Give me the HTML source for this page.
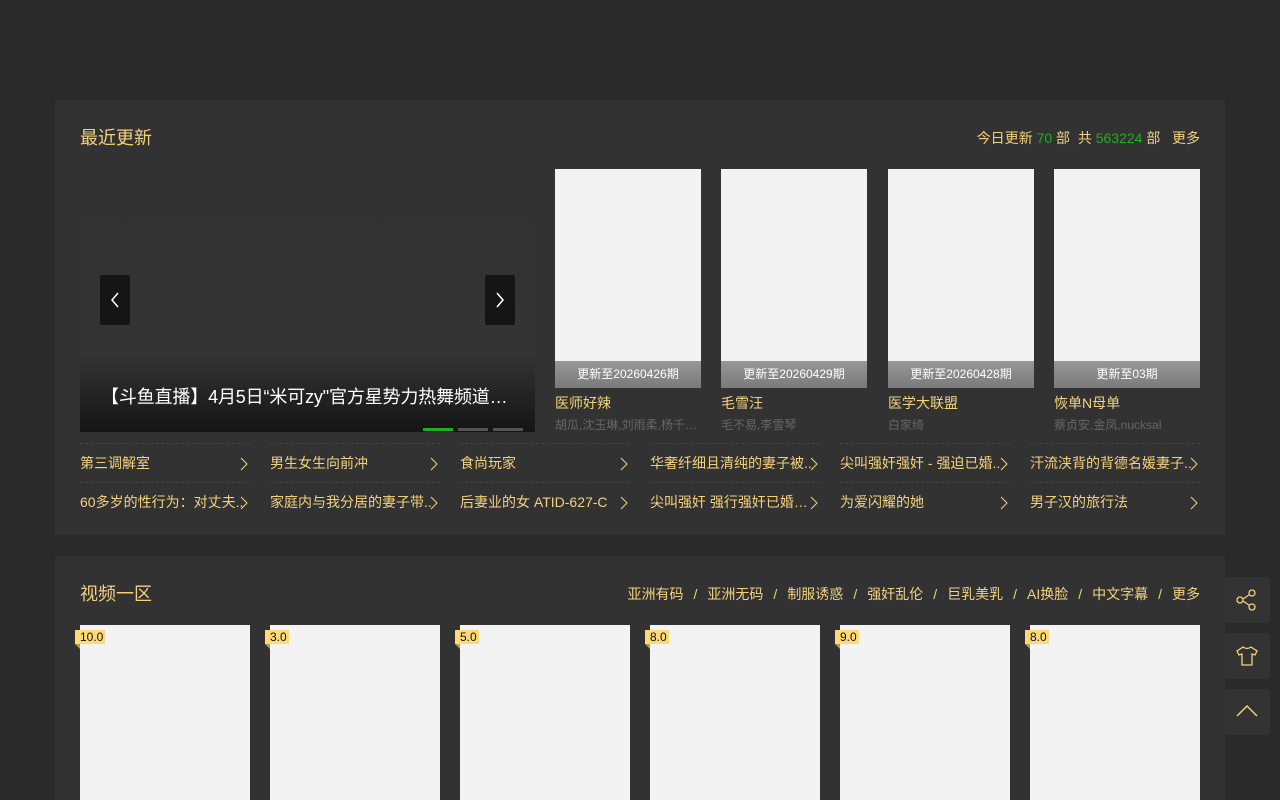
<!DOCTYPE html>
<html style="overflow:hidden;height:800px"><head><meta charset="utf-8"><style>
*{margin:0;padding:0;box-sizing:border-box}
body{width:1280px;height:800px;overflow:hidden;background:#2a2a2a;font-family:"Liberation Sans","Noto Sans CJK SC",sans-serif;color:#f3d27e;font-size:14px;position:relative}
.panel{position:absolute;left:55px;width:1170px;background:#323232}
.h{position:absolute;left:25px;font-size:18px;color:#f3d27e}
.r{position:absolute;right:25px;font-size:14px;white-space:pre}
.r b{font-weight:normal;margin:0 10px}
.g{color:#19b319}
.car{position:absolute;left:25px;top:69px;width:455px;height:263px;background:linear-gradient(#323232 0,#343434 70%,#151515 100%)}
.arr{position:absolute;top:106px;width:30px;height:50px;background:#151515;border-radius:2px}
.arr svg{position:absolute;left:9px;top:17px}
.ct{position:absolute;left:21px;top:214px;font-size:18px;letter-spacing:-0.15px;color:#fff;white-space:nowrap}
.dots{position:absolute;right:12px;top:249px}
.dots i{display:inline-block;width:30px;height:3px;background:#555;margin-left:5px}
.card{position:absolute;top:69px;width:146px}
.card .im{height:219px;background:#f3f3f3;position:relative}
.card .im span{position:absolute;bottom:0;left:0;right:0;height:27px;line-height:27px;text-align:center;color:#fff;font-size:12px;background:linear-gradient(rgba(60,60,60,.5),#7a7a7a)}
.card .t{margin-top:6px;font-size:14px;line-height:18px}
.card .a{margin-top:4px;font-size:12px;color:#666;white-space:nowrap;overflow:hidden}
.li{position:absolute;width:170px;height:39px;border-top:1px dashed #444;line-height:39px;font-size:14px;white-space:nowrap}
.li svg{position:absolute;right:2px;top:13px}
.vc{position:absolute;top:69px;width:170px;height:200px;background:#f3f3f3}
.vc span{position:absolute;left:-5px;top:5px;background:#ffd976;color:#111;font-size:12px;line-height:14px;padding:0 2px 0 5px}
.vc span:after{content:"";position:absolute;left:0;bottom:-5px;border-top:5px solid #b89a40;border-left:5px solid transparent}
.sb{position:absolute;left:1224px;width:46px;height:46px;background:#333;border-radius:4px}
.sb svg{position:absolute;left:11px;top:11px}
</style></head><body>
<div class="panel" style="top:100px;height:435px">
<div class="h" style="top:24px">最近更新</div>
<div class="r" style="top:28px">今日更新 <span class="g">70</span> 部  共 <span class="g">563224</span> 部   更多</div>
<div class="car">
<div class="arr" style="left:20px"><svg width="12" height="16"><path d="M9 1L3 8l6 7" stroke="#fff" fill="none" stroke-width="1.5"/></svg></div>
<div class="arr" style="left:405px"><svg width="12" height="16"><path d="M3 1l6 7-6 7" stroke="#fff" fill="none" stroke-width="1.5"/></svg></div>
<div class="ct">【斗鱼直播】4月5日“米可zy"官方星势力热舞频道…</div>
<div class="dots"><i style="background:#19b319"></i><i></i><i></i></div>
</div>
<div class="card" style="left:500px"><div class="im"><span>更新至20260426期</span></div><div class="t">医师好辣</div><div class="a">胡瓜,沈玉琳,刘雨柔,杨千…</div></div>
<div class="card" style="left:666px"><div class="im"><span>更新至20260429期</span></div><div class="t">毛雪汪</div><div class="a">毛不易,李雪琴</div></div>
<div class="card" style="left:833px"><div class="im"><span>更新至20260428期</span></div><div class="t">医学大联盟</div><div class="a">白家绮</div></div>
<div class="card" style="left:999px"><div class="im"><span>更新至03期</span></div><div class="t">恢单N母单</div><div class="a">蔡贞安,金凤,nucksal</div></div>
<div class="li" style="left:25px;top:343px">第三调解室<svg width="8" height="14"><path d="M1 1l6 6-6 6" stroke="#f3d27e" fill="none"/></svg></div>
<div class="li" style="left:215px;top:343px">男生女生向前冲<svg width="8" height="14"><path d="M1 1l6 6-6 6" stroke="#f3d27e" fill="none"/></svg></div>
<div class="li" style="left:405px;top:343px">食尚玩家<svg width="8" height="14"><path d="M1 1l6 6-6 6" stroke="#f3d27e" fill="none"/></svg></div>
<div class="li" style="left:595px;top:343px">华奢纤细且清纯的妻子被..<svg width="8" height="14"><path d="M1 1l6 6-6 6" stroke="#f3d27e" fill="none"/></svg></div>
<div class="li" style="left:785px;top:343px">尖叫强奸强奸 - 强迫已婚..<svg width="8" height="14"><path d="M1 1l6 6-6 6" stroke="#f3d27e" fill="none"/></svg></div>
<div class="li" style="left:975px;top:343px">汗流浃背的背德名媛妻子..<svg width="8" height="14"><path d="M1 1l6 6-6 6" stroke="#f3d27e" fill="none"/></svg></div>
<div class="li" style="left:25px;top:382px">60多岁的性行为：对丈夫..<svg width="8" height="14"><path d="M1 1l6 6-6 6" stroke="#f3d27e" fill="none"/></svg></div>
<div class="li" style="left:215px;top:382px">家庭内与我分居的妻子带..<svg width="8" height="14"><path d="M1 1l6 6-6 6" stroke="#f3d27e" fill="none"/></svg></div>
<div class="li" style="left:405px;top:382px">后妻业的女 ATID-627-C<svg width="8" height="14"><path d="M1 1l6 6-6 6" stroke="#f3d27e" fill="none"/></svg></div>
<div class="li" style="left:595px;top:382px">尖叫强奸 强行强奸已婚…<svg width="8" height="14"><path d="M1 1l6 6-6 6" stroke="#f3d27e" fill="none"/></svg></div>
<div class="li" style="left:785px;top:382px">为爱闪耀的她<svg width="8" height="14"><path d="M1 1l6 6-6 6" stroke="#f3d27e" fill="none"/></svg></div>
<div class="li" style="left:975px;top:382px">男子汉的旅行法<svg width="8" height="14"><path d="M1 1l6 6-6 6" stroke="#f3d27e" fill="none"/></svg></div>
</div>
<div class="panel" style="top:556px;height:244px">
<div class="h" style="top:24px">视频一区</div>
<div class="r" style="top:28px">亚洲有码<b>/</b>亚洲无码<b>/</b>制服诱惑<b>/</b>强奸乱伦<b>/</b>巨乳美乳<b>/</b>AI换脸<b>/</b>中文字幕<b>/</b>更多</div>
<div class="vc" style="left:25px"><span>10.0</span></div>
<div class="vc" style="left:215px"><span>3.0</span></div>
<div class="vc" style="left:405px"><span>5.0</span></div>
<div class="vc" style="left:595px"><span>8.0</span></div>
<div class="vc" style="left:785px"><span>9.0</span></div>
<div class="vc" style="left:975px"><span>8.0</span></div>
</div>
<div class="sb" style="top:577px"><svg width="24" height="24"><g stroke="#f3d27e" fill="none" stroke-width="1.3"><circle cx="5" cy="12" r="3"/><circle cx="17" cy="5" r="3"/><circle cx="17" cy="19" r="3"/><path d="M8 11l6-4M8 13l6 4"/></g></svg></div>
<div class="sb" style="top:633px"><svg width="24" height="24"><path d="M8 3l-6 4 2 4 3-1v11h10V10l3 1 2-4-6-4q-4 3-8 0z" stroke="#f3d27e" fill="none" stroke-width="1.3"/></svg></div>
<div class="sb" style="top:689px"><svg width="24" height="24"><path d="M2 16l10-10 10 10" stroke="#f3d27e" fill="none" stroke-width="1.5"/></svg></div>
</body></html>
